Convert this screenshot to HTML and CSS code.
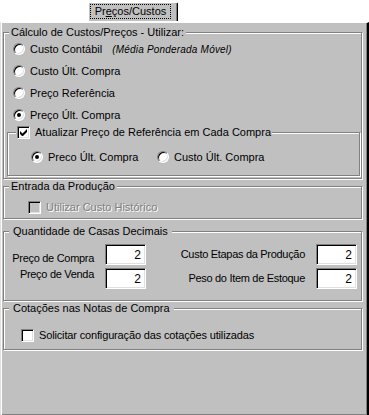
FILE: index.html
```html
<!DOCTYPE html>
<html lang="pt-BR">
<head>
  <meta charset="UTF-8">
  <title>Preços/Custos</title>
  <link rel="stylesheet" href="styles.css">
</head>
<body>
<div class="tabs">
  <div class="tab"><span class="tab-label">Pr<u>e</u>ços/Custos</span></div>
</div>

<div class="panel">
  <fieldset class="group g-calc">
    <legend>Cálculo de Custos/Preços - Utilizar:</legend>
    <div class="opt first"><span class="radio"></span>Custo Contábil <em class="note">(Média Ponderada Móvel)</em></div>
    <div class="opt"><span class="radio"></span>Custo Últ. Compra</div>
    <div class="opt"><span class="radio"></span>Preço Referência</div>
    <div class="opt"><span class="radio on"></span>Preço Últ. Compra</div>

    <fieldset class="group g-update">
      <legend class="check-legend"><span class="check"><svg width="7" height="7" viewBox="0 0 7 7"><path d="M0 2v3l2 2h1l4-4V0L2.5 4.5z" fill="#000"/></svg></span>Atualizar Preço de Referência em Cada Compra</legend>
      <div class="opt-row">
        <div class="opt"><span class="radio on"></span>Preco Últ. Compra</div>
        <div class="opt"><span class="radio"></span>Custo Últ. Compra</div>
      </div>
    </fieldset>
  </fieldset>

  <fieldset class="group g-prod">
    <legend>Entrada da Produção</legend>
    <div class="opt disabled"><span class="check off"></span>Utilizar Custo Histórico</div>
  </fieldset>

  <fieldset class="group g-dec">
    <legend>Quantidade de Casas Decimais</legend>
    <div class="dec-grid">
      <span class="lbl low">Preço de Compra</span>
      <span class="num">2</span>
      <span class="lbl">Custo Etapas da Produção</span>
      <span class="num">2</span>
      <span class="lbl high">Preço de Venda</span>
      <span class="num">2</span>
      <span class="lbl">Peso do Item de Estoque</span>
      <span class="num">2</span>
    </div>
  </fieldset>

  <fieldset class="group g-cot">
    <legend>Cotações nas Notas de Compra</legend>
    <div class="opt"><span class="check"></span>Solicitar configuração das cotações utilizadas</div>
  </fieldset>
</div>
</body>
</html>
```

FILE: styles.css
```css
body {
  margin: 0;
  width: 369px;
  height: 415px;
  background: #fff;
  font-family: "Liberation Sans", Arial, sans-serif;
  font-size: 11px;
  color: #000;
  overflow: hidden;
}

/* tab strip */
.tabs {
  height: 20px;
}
.tab {
  position: relative;
  z-index: 1;
  box-sizing: border-box;
  margin: 2px 0 -1px 88px;
  width: 90px;
  height: 19px;
  background: #c0c0c0;
  border-top: 1px solid #fff;
  border-left: 1px solid #fff;
  border-right: 1px solid #000;
  border-top-right-radius: 2px;
  box-shadow: inset -1px 0 0 #808080;
  text-align: center;
}
.tab-label {
  display: inline-block;
  margin-top: 1px;
  margin-left: -5px;
  padding: 0 4px;
  line-height: 13px;
  border: 1px dotted #000;
}

/* panel */
.panel {
  box-sizing: border-box;
  height: 395px;
  background: #c0c0c0;
  border-top: 1px solid #fff;
  border-left: 1px solid #dfdfdf;
  border-right: 2px solid #000;
  border-bottom: 2px solid #000;
  box-shadow: inset 1px 0 0 #fff, inset -1px -1px 0 #808080;
  padding: 3px 5px 0 2px;
}

.group {
  margin: 0 0 1px 0;
  padding: 0;
  border: 1px solid #808080;
  box-shadow: inset 1px 1px 0 #fff, 1px 1px 0 #fff;
  min-width: 0;
}
.group legend {
  margin-left: 5px;
  padding: 0 2px;
  line-height: 13px;
  background: #c0c0c0;
}

.opt {
  display: flex;
  align-items: center;
  height: 22px;
  padding-left: 9px;
  white-space: nowrap;
}
.opt.first {
  margin-top: -1px;
}
.note {
  margin-left: 10px;
  font-size: 10px;
  letter-spacing: 0.2px;
}

.radio {
  position: relative;
  box-sizing: border-box;
  width: 12px;
  height: 12px;
  margin-right: 5px;
  border-radius: 50%;
  background: #fff;
  border: 1px solid;
  border-color: #808080 #fff #fff #808080;
  box-shadow: inset 1px 1px 0 #000, inset -1px -1px 0 #dfdfdf;
  flex: none;
}
.radio.on::after {
  content: "";
  position: absolute;
  left: 3px;
  top: 3px;
  width: 4px;
  height: 4px;
  border-radius: 50%;
  background: #000;
}

.check {
  display: inline-flex;
  align-items: center;
  justify-content: center;
  box-sizing: border-box;
  width: 13px;
  height: 13px;
  margin-right: 5px;
  background: #fff;
  border: 1px solid;
  border-color: #808080 #fff #fff #808080;
  box-shadow: inset 1px 1px 0 #000, inset -1px -1px 0 #dfdfdf;
  vertical-align: top;
  flex: none;
}
.check.off {
  background: #c0c0c0;
}

/* first group */
.g-calc {
  padding-bottom: 2px;
}
.g-update {
  margin: 0 1px 0 3px;
  padding: 7px 0 7px;
}
.g-update .check-legend {
  display: flex;
  align-items: center;
  margin-left: 8px;
  padding: 0 1px;
}
.opt-row {
  display: flex;
}
.opt-row .opt {
  padding-left: 23px;
  width: 103px;
}

/* production */
.g-prod {
  padding-top: 3px;
  margin-bottom: 6px;
}
.g-prod .opt {
  padding-left: 24px;
}
.disabled {
  color: #808080;
  text-shadow: 1px 1px 0 #fff;
}

/* decimals */
.g-dec {
  padding: 6px 0 11px;
}
.g-dec legend {
  padding: 0 4px;
}
.dec-grid {
  display: grid;
  grid-template-columns: 90px 41px 148px 41px;
  grid-template-rows: 21px 21px;
  column-gap: 11px;
  row-gap: 3px;
}
.lbl {
  align-self: center;
  text-align: right;
  line-height: 13px;
  white-space: nowrap;
  letter-spacing: -0.3px;
}
.lbl.low {
  align-self: end;
}
.lbl.high {
  align-self: start;
}
.num {
  box-sizing: border-box;
  height: 21px;
  background: #fff;
  border: 1px solid;
  border-color: #808080 #fff #fff #808080;
  box-shadow: inset 1px 1px 0 #000, inset -1px -1px 0 #dfdfdf;
  text-align: right;
  padding: 3px 4px 0 0;
  font-size: 12px;
  line-height: 14px;
}

/* quotes */
.g-cot {
  padding: 10px 0 4px;
}
.g-cot legend {
  padding: 0 4px;
}
.g-cot .opt {
  height: 20px;
  padding-left: 17px;
  letter-spacing: -0.15px;
}
```
